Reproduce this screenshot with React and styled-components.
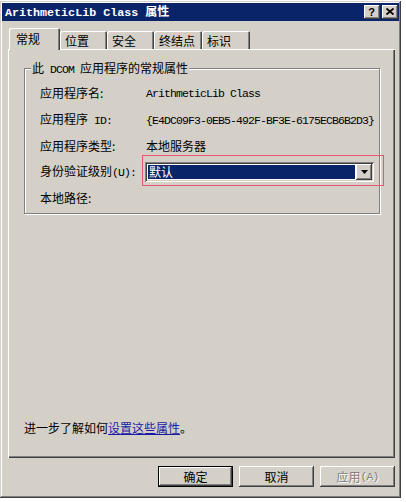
import React from 'react'
import styled, { createGlobalStyle } from 'styled-components'

const GlobalStyle = createGlobalStyle`
  html, body {
    margin: 0;
    padding: 0;
    background: #fff;
  }
  body {
    font-family: "Noto Sans CJK SC", "Liberation Sans", sans-serif;
    font-size: 12px;
    color: #000;
  }
`

const Window = styled.div`
  box-sizing: border-box;
  width: 401px;
  height: 497px;
  margin-top: 1px;
  padding: 2px;
  background: #d4d0c8;
  box-shadow: inset -1px -1px #404040, inset 1px 1px #d4d0c8,
    inset -2px -2px #808080, inset 2px 2px #fff;
  display: flex;
  flex-direction: column;
`

const TitleBar = styled.div`
  height: 18px;
  flex: none;
  display: flex;
  align-items: center;
  padding: 0 1px 0 3px;
  background: #0a246a;
  color: #fff;
  font-weight: bold;
`

const TitleText = styled.div`
  flex: 1;
  line-height: 14px;
  white-space: pre;
`

const Latin = styled.span`
  font-family: "Liberation Mono", monospace;
  font-size: ${(p) => (p.$bold ? '11.7px' : '11.5px')};
  letter-spacing: ${(p) => (p.$bold ? '0' : '-0.9px')};
  white-space: pre;
`

const CaptionButtons = styled.div`
  display: flex;
  gap: 2px;
`

const CaptionButton = styled.div`
  box-sizing: border-box;
  width: 16px;
  height: 14px;
  background: #d4d0c8;
  box-shadow: inset -1px -1px #404040, inset 1px 1px #fff,
    inset -2px -2px #808080;
  display: flex;
  align-items: center;
  justify-content: center;
  color: #000;
  font-family: "Liberation Sans", sans-serif;
  font-weight: bold;
  font-size: 11px;
  line-height: 10px;
  padding: 0 1px 1px 0;
`

const Body = styled.div`
  flex: 1;
  display: flex;
  flex-direction: column;
  padding: 7px 4px 0 6px;
`

const TabRow = styled.div`
  display: flex;
  align-items: flex-end;
  height: 21px;
  position: relative;
  z-index: 1;
`

const Tab = styled.div`
  box-sizing: border-box;
  width: ${(p) => p.$w}px;
  height: ${(p) => (p.$active ? 22 : 18)}px;
  margin-left: ${(p) => (p.$active ? 1 : 0)}px;
  margin-bottom: ${(p) => (p.$active ? -1 : 0)}px;
  padding: ${(p) => (p.$active ? '4px 0 0 7px' : '3px 0 0 5px')};
  background: #d4d0c8;
  line-height: 14px;
  box-shadow: inset 1px 1px #fff, inset -1px 0 #404040, inset -2px 0 #808080;
  border-radius: 2px 2px 0 0;
`

const Panel = styled.div`
  box-sizing: border-box;
  width: 387px;
  height: 409px;
  display: flex;
  flex-direction: column;
  padding: 19px 14px 23px 16px;
  box-shadow: inset 1px 1px #fff, inset -1px -1px #404040,
    inset -2px -2px #808080;
`

const Group = styled.div`
  position: relative;
  box-sizing: border-box;
  width: 356px;
  height: 146px;
  padding: 10px 8px 0 15px;
  border: 1px solid #808080;
  box-shadow: inset 1px 1px #fff, 1px 1px #fff;
`

const Legend = styled.div`
  position: absolute;
  top: -8px;
  left: 6px;
  padding: 0 1px;
  background: #d4d0c8;
  line-height: 14px;
  white-space: pre;
`

const Fields = styled.div`
  display: grid;
  grid-template-columns: 106px 1fr;
  grid-template-rows: 27px 27px 26px 26px 26px;
  align-items: center;
  line-height: 14px;
`

const Label = styled.div`
  white-space: pre;
`

const Value = styled.div`
  white-space: nowrap;
`

const ComboWrap = styled.div`
  position: relative;
  margin-left: -1px;
  width: 229px;
  height: 20px;
`

const Annotation = styled.div`
  position: absolute;
  top: -7px;
  left: -3px;
  right: -10px;
  bottom: -4px;
  border: 1px solid #ea5670;
  pointer-events: none;
`

const Combo = styled.div`
  box-sizing: border-box;
  height: 20px;
  display: flex;
  align-items: stretch;
  padding: 2px;
  background: #fff;
  box-shadow: inset 1px 1px #808080, inset -1px -1px #fff,
    inset 2px 2px #404040, inset -2px -2px #d4d0c8;
`

const ComboValue = styled.div`
  flex: 1;
  margin: 1px;
  padding-left: 1px;
  background: #0a246a;
  color: #fff;
  line-height: 14px;
`

const ComboButton = styled.div`
  box-sizing: border-box;
  width: 16px;
  background: #d4d0c8;
  box-shadow: inset -1px -1px #404040, inset 1px 1px #fff,
    inset -2px -2px #808080;
  display: flex;
  align-items: center;
  justify-content: center;
`

const Spacer = styled.div`
  flex: 1;
`

const HelpText = styled.div`
  line-height: 14px;
`

const Link = styled.a`
  color: #1a1aa6;
  text-decoration: underline;
`

const Footer = styled.div`
  display: flex;
  justify-content: flex-end;
  gap: 6px;
  margin-top: 8px;
`

const Button = styled.div`
  box-sizing: border-box;
  width: 75px;
  height: 21px;
  display: flex;
  align-items: center;
  justify-content: center;
  background: #d4d0c8;
  line-height: 14px;
  color: ${(p) => (p.$disabled ? '#808080' : '#000')};
  text-shadow: ${(p) => (p.$disabled ? '1px 1px #fff' : 'none')};
  box-shadow: ${(p) =>
    p.$default
      ? 'inset 0 0 0 1px #000, inset -2px -2px #404040, inset 2px 2px #fff, inset -3px -3px #808080'
      : 'inset -1px -1px #404040, inset 1px 1px #fff, inset -2px -2px #808080'};
`

const tabs = [
  { label: '常规', w: 51, active: true },
  { label: '位置', w: 47 },
  { label: '安全', w: 47 },
  { label: '终结点', w: 48 },
  { label: '标识', w: 48 },
]

export default function App() {
  return (
    <>
      <GlobalStyle />
      <Window>
        <TitleBar>
          <TitleText>
            <Latin $bold>ArithmeticLib Class </Latin>属性
          </TitleText>
          <CaptionButtons>
            <CaptionButton>?</CaptionButton>
            <CaptionButton>
              <svg width="8" height="7" viewBox="0 0 8 7">
                <path d="M0.5 0.5 L7.5 6.5 M7.5 0.5 L0.5 6.5" stroke="#000" strokeWidth="1.8" />
              </svg>
            </CaptionButton>
          </CaptionButtons>
        </TitleBar>
        <Body>
          <TabRow>
            {tabs.map((t) => (
              <Tab key={t.label} $w={t.w} $active={t.active}>
                {t.label}
              </Tab>
            ))}
          </TabRow>
          <Panel>
            <Group>
              <Legend>
                此<Latin> DCOM </Latin>应用程序的常规属性
              </Legend>
              <Fields>
                <Label>应用程序名:</Label>
                <Value>
                  <Latin>ArithmeticLib Class</Latin>
                </Value>
                <Label>
                  应用程序<Latin> ID:</Latin>
                </Label>
                <Value>
                  <Latin>{'{E4DC09F3-0EB5-492F-BF3E-6175ECB6B2D3}'}</Latin>
                </Value>
                <Label>应用程序类型:</Label>
                <Value>本地服务器</Value>
                <Label>
                  身份验证级别<Latin>(U):</Latin>
                </Label>
                <ComboWrap>
                  <Combo>
                    <ComboValue>默认</ComboValue>
                    <ComboButton>
                      <svg width="7" height="4" viewBox="0 0 7 4">
                        <path d="M0 0 H7 L3.5 4 Z" fill="#000" />
                      </svg>
                    </ComboButton>
                  </Combo>
                  <Annotation />
                </ComboWrap>
                <Label>本地路径:</Label>
                <Value />
              </Fields>
            </Group>
            <Spacer />
            <HelpText>
              进一步了解如何<Link>设置这些属性</Link>。
            </HelpText>
          </Panel>
          <Footer>
            <Button $default>确定</Button>
            <Button>取消</Button>
            <Button $disabled>
              应用<Latin>(A)</Latin>
            </Button>
          </Footer>
        </Body>
      </Window>
    </>
  )
}
